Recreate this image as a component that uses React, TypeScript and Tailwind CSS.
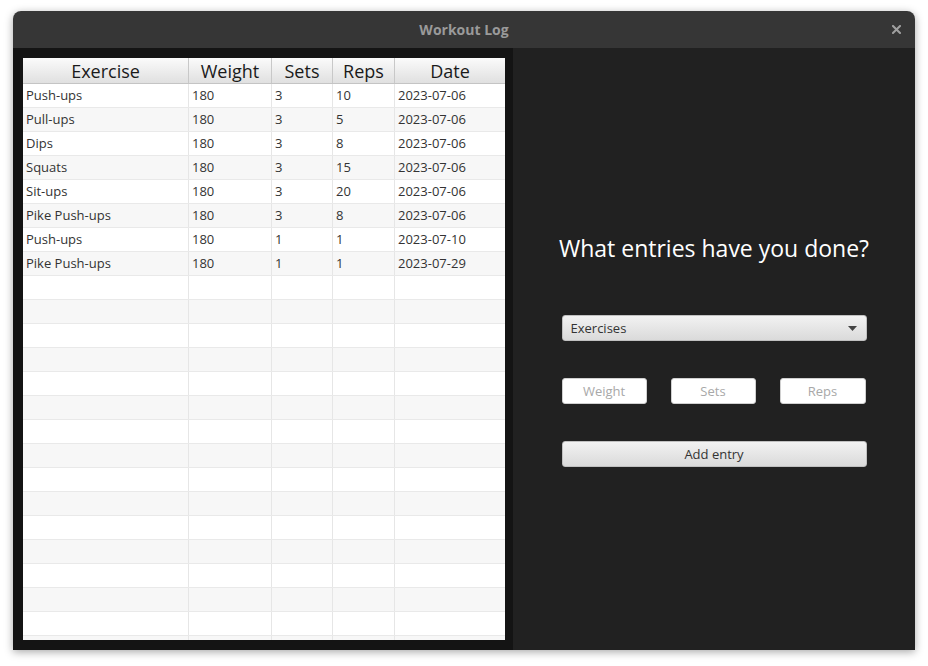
import React from "react";

const rows: [string, string, string, string, string][] = [
  ["Push-ups", "180", "3", "10", "2023-07-06"],
  ["Pull-ups", "180", "3", "5", "2023-07-06"],
  ["Dips", "180", "3", "8", "2023-07-06"],
  ["Squats", "180", "3", "15", "2023-07-06"],
  ["Sit-ups", "180", "3", "20", "2023-07-06"],
  ["Pike Push-ups", "180", "3", "8", "2023-07-06"],
  ["Push-ups", "180", "1", "1", "2023-07-10"],
  ["Pike Push-ups", "180", "1", "1", "2023-07-29"],
];

const widths = ["w-[166px]", "w-[83px]", "w-[61px]", "w-[62px]", "flex-1"];
const headers = ["Exercise", "Weight", "Sets", "Reps", "Date"];

export default function App() {
  const allRows: string[][] = [...rows];
  while (allRows.length < 24) allRows.push(["", "", "", "", ""]);
  return (
    <div className="w-[928px] h-[666px] bg-white overflow-hidden" style={{ fontFamily: '"Open Sans", "Noto Sans", sans-serif' }}>
      <div className="ml-[13px] mt-[11px] w-[902px] h-[639px] rounded-t-[8px] overflow-hidden shadow-[0_2px_8px_rgba(0,0,0,0.35)] flex flex-col">
        {/* Title bar */}
        <div className="h-[37px] bg-[#363636] relative flex items-center justify-center">
          <span className="text-[14px] font-bold text-[#9a9a9a]">Workout Log</span>
          <svg className="absolute right-[14px] top-[14px]" width="9" height="9" viewBox="0 0 9 9">
            <path d="M1 1L8 8M8 1L1 8" stroke="#a0a0a0" strokeWidth="2" strokeLinecap="square" />
          </svg>
        </div>
        <div className="flex flex-1 min-h-0">
          {/* Left panel */}
          <div className="w-[500px] bg-[#141414] pl-[10px] pr-[8px] pt-[10px] pb-[10px]">
            <div className="w-[482px] h-[582px] bg-white overflow-hidden flex flex-col">
              <div className="flex h-[26px] shrink-0 bg-gradient-to-b from-[#fbfbfb] to-[#e0e0e0] border-b border-[#c4c4c4]">
                {headers.map((h, i) => (
                  <div
                    key={h}
                    className={`${widths[i]} ${i < 4 ? "border-r border-[#c8c8c8]" : ""} flex items-center justify-center text-[18px] leading-none text-[#1a1a1a]`}
                  >
                    {h}
                  </div>
                ))}
              </div>
              {allRows.map((r, ri) => (
                <div
                  key={ri}
                  className={`flex h-[24px] shrink-0 border-b border-[#e9e9e9] ${ri % 2 === 1 ? "bg-[#f7f7f7]" : "bg-white"}`}
                >
                  {r.map((c, ci) => (
                    <div
                      key={ci}
                      className={`${widths[ci]} ${ci < 4 ? "border-r border-[#e6e6e6]" : ""} flex items-center pl-[3px] text-[13px] text-[#333333]`}
                    >
                      {c}
                    </div>
                  ))}
                </div>
              ))}
            </div>
          </div>
          {/* Right panel */}
          <div className="flex-1 bg-[#212121] flex flex-col items-center">
            <div className="mt-[185px] text-[23px] leading-[31px] text-white">What entries have you done?</div>
            <div className="mt-[51px] w-[305px] h-[26px] rounded-[3px] bg-gradient-to-b from-[#f2f2f2] to-[#dadada] border border-[#c0c0c0] flex items-center justify-between pl-[8px] pr-[9px] pt-[1px]">
              <span className="text-[13px] text-[#333333]">Exercises</span>
              <svg width="9" height="5" viewBox="0 0 9 5">
                <path d="M0 0H9L4.5 5Z" fill="#444444" />
              </svg>
            </div>
            <div className="mt-[37px] w-[305px] flex gap-[24px]">
              {["Weight", "Sets", "Reps"].map((p, i) => (
                <div
                  key={p}
                  className={`${i === 2 ? "w-[86px]" : "w-[85px]"} h-[26px] rounded-[3px] bg-white border border-[#d0d0d0] flex items-center justify-center pt-[1px] text-[13px] text-[#a8a8a8]`}
                >
                  {p}
                </div>
              ))}
            </div>
            <div className="mt-[37px] w-[305px] h-[26px] rounded-[3px] bg-gradient-to-b from-[#f2f2f2] to-[#dadada] border border-[#c0c0c0] flex items-center justify-center pt-[1px] text-[13px] text-[#333333]">
              Add entry
            </div>
          </div>
        </div>
      </div>
    </div>
  );
}
